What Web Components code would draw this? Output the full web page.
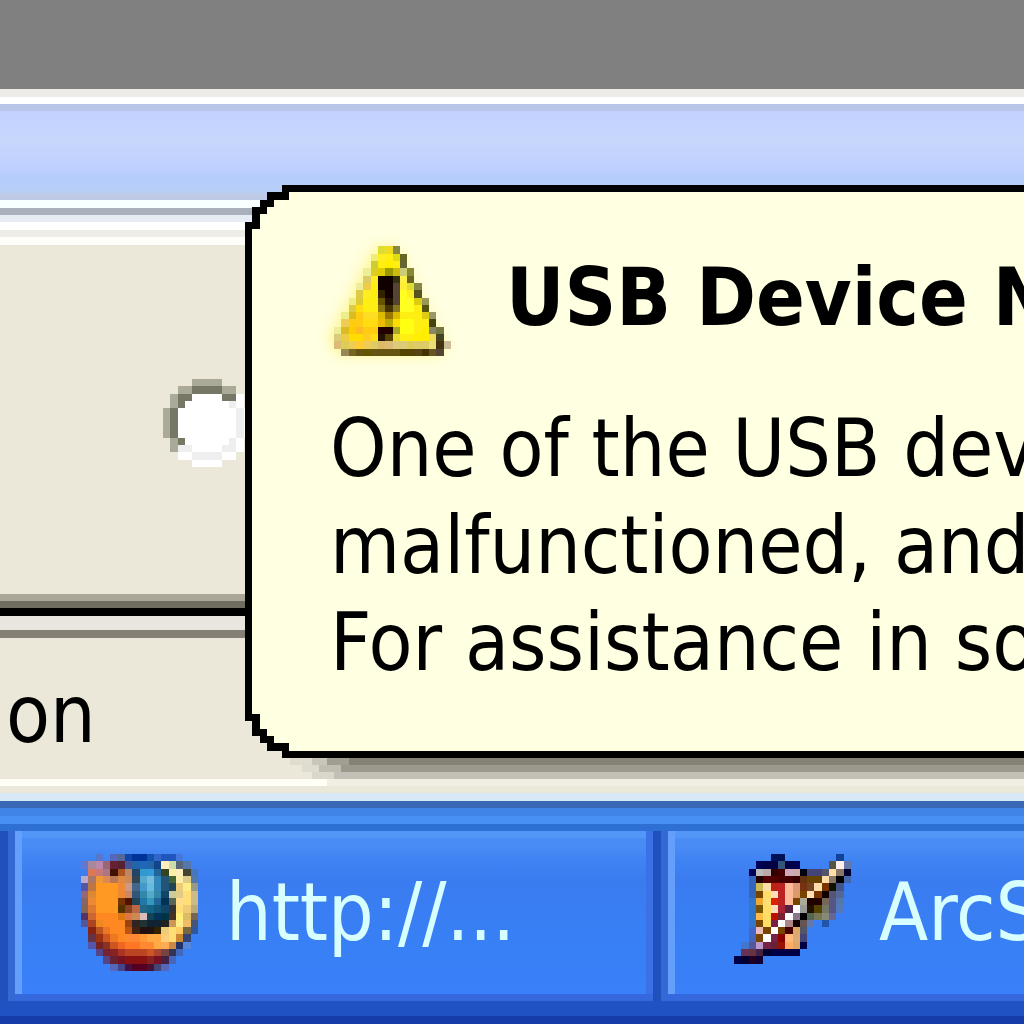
<!DOCTYPE html>
<html lang="en">
<head>
<meta charset="utf-8">
<title>Desktop</title>
<style>
    html, body { margin: 0; height: 100%; overflow: hidden; }
    body {
        font-family: "DejaVu Sans Condensed", "Noto Sans", sans-serif;
        font-size: 80px;
        line-height: 97px;
        color: #000;
    }
</style>
</head>
<body>
<xp-desktop>
    <xp-titlebar></xp-titlebar>
    <xp-panel><xp-radio label="Option"></xp-radio></xp-panel>
    <xp-statusbar>on</xp-statusbar>
    <xp-balloon slot="overlay">
        <pixel-icon slot="icon" name="warning"></pixel-icon>
        <span slot="title">USB Device N</span>
        <div>One of the USB dev</div>
        <div>malfunctioned, and</div>
        <div>For assistance in so</div>
    </xp-balloon>
    <xp-taskbar slot="taskbar">
        <xp-task icon="firefox">http://...</xp-task>
        <xp-task icon="arcsoft">ArcS</xp-task>
    </xp-taskbar>
</xp-desktop>

<script>
// One string per row: "." is an empty cell, "abc*4" repeats a colour
const ICONS = {
    warning: [
        '',
        '.*6 dd3 ed2 884',
        '.*5 ee7 fe2 fe1 dd1 662',
        '.*5 cc3 fe1 fe0 fe1 663',
        '.*4 ee9 dc2 dc0 990 cb1 cc7 883',
        '.*4 dc6 fe2 100*2 331 fe4 662',
        '.*3 ee9 ec4 fe1 100*2 543 fe3 dd3 884',
        '.*3 dc4 fe2 fe1 320 100 543 ff2 fe2 552',
        '.*2 ee8 dc3 fe1*2 650 210 543 ff2*2 dc1 995',
        '.*2 dc4 fd1 fe1*2 871 430 872 ff2*2 fe1 551',
        '. ee8 db2 fc1 fd2*2 db0 970 db0 fe1*3 dc1 996',
        '. ec5 fc1*2 fd1*2 eb0 ba0 fd0 ff1*2 fe1*2 441',
        'ee9 db2 fc0 fb2 fc1*2 200*2 aa2 ff1*2 fe1 fe0 886 774',
        'dc7 ec4 fd0*2 fc2 fd1 210 540 ed3 fe1*2 fe0*2 ed5 442',
        'db7 dc5 ec5 fc3 ec5 dc6 db6 db7 dc7*2 dc5 dc6*2 ed7 431 cb9',
        '. 985 762 651 650 651*4 540*2 541 430 652 543'
    ],
    firefox: [
        '.*2 57c . 56b 569 14a 039*2 15a 36c 25b*2 47d',
        '67c a89 b8a 967 623 523 459 26a 26b 26a 148 feb cda 567 57a',
        '. d75 c77 a78 410 a52 b86 246 39c 39d 269 342 fea feb 443 47b',
        'bac a76 e93 d85 b75 d84 c85 345 5ac 7bd 38b 257 463 fea dc8 57a',
        '55a b74 f92*3 e83 c98 468 49c 6bd 38b 257 245 ec7 fe8 998',
        '967 d83 f92*3 e83 c86 357 38a 5ac 38a 146 cc9 dc8 fd7 cb8',
        '866 e83 f92*3 730 510 245 27a 39b 269 035 565 fd8 fd7 cb8',
        '865 d73 f92*3 530 842 b64 268 168 157 146 333 fd7 ec7 ba7',
        '536 c63 f82*3 d71 d74 c85 dbb 145 035 034 432 fe7 db6 765',
        '559 a42 e82 f82*3 941 322 233 123*2 222 c95 fe8 eb6 457',
        '. 821 b52 e72 f82*2 b51 421 211*2 320 ec7 fd7 fc6 764 359',
        '. 634 931 c52 e72 f82 f83*2 f93 fa4*2 fc7 fd7 c83 347',
        '. 55a 722 832 c52 e62 f72*2 f83*2 fa4 fa5 c84 236 58d',
        '.*2 548 723 822 a32 b42*3 c52 a43 744 335 46b',
        '.*3 548 623 712 811*3 822 712 424 46b',
        '.*4 56b 448 414 502*2 413 447 56b'
    ],
    arcsoft: [
        '.*5 015*2 .*7 149',
        '.*3 005 004*2 357 004 005 .*4 554 fee 67a',
        '.*2 005 bbb baa 300 400 cab caa 001 447*2 556 fda 876 003',
        '.*2 36b 200 500*2 400*2 300 631 640*2 fda 876 000 46a',
        '.*2 36b cb5 fda b21 b22 fb9 d97 731 742 fda 730 110 458',
        '.*2 36b 740 fd6 fdb b22 fb9 d96 740 fdb 730 100 557 569',
        '.*2 37c ea3 fd7 d20 b22 fb9 740 aa9 200*2 765 558 57a',
        '.*2 37c 750 fd6 fdb a23 524 fff 999 210 540 776 558 57b',
        '.*2 37c fb4 fd6 b10 723 fff 878 000 565 775 887 669',
        '.*2 37c 740 fd6 724 fff a88 100 655 67a .  25a',
        '.*2 46c ebb 740 fff 740 400 da6 556',
        '.*2 46b 740 fff 724 800 fb7 da7 447',
        '. 47c 559 b9c 724 623 910 fa6 da6 004',
        '. 635 634 424 003 004*4',
        '004 003 202 103'
    ],
    radio: [
        '.*4 aa9*4',
        '.*2 aa9*2 776*4 aa9*2',
        '. aa9 776*2 fff*4 776*2 fff',
        '. aa9 776 fff*6 eee fff',
        'aa9 776 fff*8 eee fff',
        'aa9 776 fff*8 eee fff',
        'aa9 776 fff*8 eee fff',
        'aa9 776 fff*8 eee fff',
        '. aa9 776 fff*6 eee fff',
        '. aa9 eee*2 fff*4 eee*2 fff',
        '.*2 fff*2 eee*4 fff*2',
        '.*4 fff*4'
    ]
};

class PixelIcon extends HTMLElement {
    constructor() {
        super();
        this.attachShadow({ mode: 'open' });
    }

    connectedCallback() {
        const name = this.getAttribute('name');
        const size = name === 'radio' ? 12 : 16;
        const rects = ICONS[name].map((row, y) => {
            let x = 0;
            return row.split(/\s+/).filter(Boolean).map((run) => {
                const [color, count] = run.split('*');
                const width = Number(count || 1);
                const rect = color === '.' ? '' :
                    `<rect x="${x}" y="${y}" width="${width}" height="1" fill="#${color}"/>`;
                x += width;
                return rect;
            }).join('');
        }).join('');

        this.shadowRoot.innerHTML = `
            <style>
                :host { display: block; flex: none; width: 117px; height: 117px; }
                :host([name="radio"]) { width: 88px; height: 88px; }
                :host([name="warning"]) { filter: drop-shadow(-4px 0 6px #fff79a); }
                svg { display: block; width: 100%; height: 100%; }
            </style>
            <svg viewBox="0 0 ${size} ${size}" shape-rendering="crispEdges" aria-hidden="true">${rects}</svg>
        `;
    }
}

class XpDesktop extends HTMLElement {
    constructor() {
        super();
        this.attachShadow({ mode: 'open' }).innerHTML = `
            <style>
                :host {
                    display: flex;
                    flex-direction: column;
                    position: relative;
                    height: 100%;
                    overflow: hidden;
                    background: #808080;
                }
                main {
                    flex: 1;
                    min-height: 0;
                    display: flex;
                    flex-direction: column;
                    margin-top: 89px;
                }
            </style>
            <main><slot></slot></main>
            <slot name="taskbar"></slot>
            <slot name="overlay"></slot>
        `;
    }
}

class XpTitlebar extends HTMLElement {
    constructor() {
        super();
        this.attachShadow({ mode: 'open' }).innerHTML = `
            <style>
                :host { display: block; flex: none; }
                .frame {
                    height: 8px;
                    background: #ecebe7;
                    border-bottom: 7px solid #fff;
                }
                .caption {
                    height: 82px;
                    border-top: 7px solid #b8c5e6;
                    border-bottom: 7px solid #bfcae6;
                    background: linear-gradient(#c2d2ff, #c7d6fb 35%, #c0d1ff 68%, #b4cdfb 82%, #b8cff5);
                }
                .edge {
                    height: 45px;
                    background: linear-gradient(#f8ffff 8px, #a7b0bb 8px 15px, #e7ecf4 15px 22px,
                        #fff 22px 30px, #edece6 30px 37px, #fffffa 37px);
                }
            </style>
            <div class="frame"></div>
            <div class="caption"></div>
            <div class="edge"></div>
        `;
    }
}

class XpPanel extends HTMLElement {
    constructor() {
        super();
        this.attachShadow({ mode: 'open' }).innerHTML = `
            <style>
                :host {
                    display: flex;
                    flex-direction: column;
                    flex: 1;
                    min-height: 0;
                    background: #ebe8da;
                }
                .content {
                    flex: 1;
                    display: flex;
                    align-items: center;
                    padding: 6px 0 0 163px;
                }
                .rule {
                    height: 44px;
                    background: linear-gradient(#a9a698 7px, #6f6c60 7px 14px, #000 14px 22px,
                        #e9e6e0 22px 36px, #848074 36px);
                }
            </style>
            <div class="content"><slot></slot></div>
            <div class="rule"></div>
        `;
    }
}

class XpRadio extends HTMLElement {
    constructor() {
        super();
        this.attachShadow({ mode: 'open' });
    }

    connectedCallback() {
        this.shadowRoot.innerHTML = `
            <style>
                :host { display: block; }
                label { display: grid; }
                input, pixel-icon { grid-area: 1 / 1; }
                input { appearance: none; width: 88px; height: 88px; margin: 0; }
            </style>
            <label>
                <pixel-icon name="radio"></pixel-icon>
                <input type="radio" aria-label="${this.getAttribute('label')}">
            </label>
        `;
    }
}

class XpStatusbar extends HTMLElement {
    constructor() {
        super();
        this.attachShadow({ mode: 'open' }).innerHTML = `
            <style>
                :host {
                    display: block;
                    flex: none;
                    background: #ebe8da;
                }
                .text { padding: 28px 6px 16px; }
                .edge {
                    height: 22px;
                    background: linear-gradient(#fffff5 7px, #ebe8da 7px 14px, #d9e8f6 14px);
                }
            </style>
            <div class="text"><slot></slot></div>
            <div class="edge"></div>
        `;
    }
}

class XpBalloon extends HTMLElement {
    constructor() {
        super();
        this.attachShadow({ mode: 'open' }).innerHTML = `
            <style>
                :host {
                    position: absolute;
                    top: 185px;
                    left: 245px;
                    right: 0;
                    white-space: nowrap;
                }
                /* the stepped corners: black outline, then the fill inside it */
                .outline {
                    background: #000;
                    padding: 7px 0 7px 0;
                    clip-path: polygon(
                        100% 0, 37px 0, 37px 7px, 22px 7px, 22px 15px, 15px 15px, 15px 22px,
                        7px 22px, 7px 37px, 0 37px,
                        0 calc(100% - 37px), 7px calc(100% - 37px), 7px calc(100% - 22px),
                        15px calc(100% - 22px), 15px calc(100% - 15px), 22px calc(100% - 15px),
                        22px calc(100% - 7px), 37px calc(100% - 7px), 37px 100%, 100% 100%);
                }
                .fill {
                    background: #ffffe1;
                    padding: 47px 0 60px 85px;
                    overflow: hidden;
                    clip-path: polygon(
                        100% 0, 44px 0, 44px 8px, 29px 8px, 29px 15px, 22px 15px, 22px 22px,
                        15px 22px, 15px 37px, 7px 37px,
                        7px calc(100% - 37px), 15px calc(100% - 37px), 15px calc(100% - 22px),
                        22px calc(100% - 22px), 22px calc(100% - 15px), 29px calc(100% - 15px),
                        29px calc(100% - 8px), 44px calc(100% - 8px), 44px 100%, 100% 100%);
                }
                header {
                    display: flex;
                    align-items: center;
                    gap: 55px;
                    margin: 0 0 44px 4px;
                }
                h1 { margin: 0; font: inherit; font-weight: bold; }
                .shadow div { height: 7px; }
                .s1 { background: linear-gradient(90deg, transparent 45px, #e0ddd0 45px 67px, #c8c6ba 67px 82px, #a09d91 82px 104px, #858174 104px); }
                .s2 { background: linear-gradient(90deg, transparent 57px, #dfdccf 57px 74px, #c0beb1 74px 96px, #9b988d 96px); }
                .s3 { background: linear-gradient(90deg, transparent 67px, #d9d7ca 67px 89px, #c2c0b6 89px); }
                .s4 { background: linear-gradient(90deg, transparent 82px, #f1eee4 82px); }
            </style>
            <div class="outline">
                <div class="fill">
                    <header>
                        <slot name="icon"></slot>
                        <h1><slot name="title"></slot></h1>
                    </header>
                    <slot></slot>
                </div>
            </div>
            <div class="shadow">
                <div class="s1"></div>
                <div class="s2"></div>
                <div class="s3"></div>
                <div class="s4"></div>
            </div>
        `;
    }
}

class XpTaskbar extends HTMLElement {
    constructor() {
        super();
        this.attachShadow({ mode: 'open' }).innerHTML = `
            <style>
                :host { display: block; flex: none; overflow: hidden; }
                .top {
                    height: 30px;
                    background: linear-gradient(#3b68b4 7px, #4084e8 7px 15px, #4990f5 15px 23px, #2d6fd2 23px);
                }
                nav {
                    display: flex;
                    gap: 15px;
                    padding-left: 15px;
                    background: #2c5fce;
                }
                .bottom {
                    height: 23px;
                    background: linear-gradient(#2052c4 15px, #153ca8 15px);
                }
            </style>
            <div class="top"></div>
            <nav><slot></slot></nav>
            <div class="bottom"></div>
        `;
    }
}

class XpTask extends HTMLElement {
    constructor() {
        super();
        this.attachShadow({ mode: 'open' });
    }

    connectedCallback() {
        this.shadowRoot.innerHTML = `
            <style>
                :host {
                    display: block;
                    flex: none;
                    width: 638px;
                    box-shadow: -7px 0 #3468d2, -15px 0 #1f50bb;
                }
                button {
                    display: flex;
                    align-items: center;
                    gap: 28px;
                    width: 100%;
                    height: 170px;
                    padding: 0 0 8px 66px;
                    border: 0;
                    background: linear-gradient(#5296f8 7px, #498cf6 7px 15px, #4083f3 28px, #3a7cf0 50px, #3880f6 120px, #3a80fa);
                    box-shadow: inset 0 -7px #3468dc, inset 7px 0 #639ffb, inset -7px 0 #3b70e6;
                    font: inherit;
                    line-height: 97px;
                    color: #d8ffff;
                    white-space: nowrap;
                }
            </style>
            <button type="button">
                <pixel-icon name="${this.getAttribute('icon')}"></pixel-icon>
                <span><slot></slot></span>
            </button>
        `;
    }
}

customElements.define('pixel-icon', PixelIcon);
customElements.define('xp-desktop', XpDesktop);
customElements.define('xp-titlebar', XpTitlebar);
customElements.define('xp-panel', XpPanel);
customElements.define('xp-radio', XpRadio);
customElements.define('xp-statusbar', XpStatusbar);
customElements.define('xp-balloon', XpBalloon);
customElements.define('xp-taskbar', XpTaskbar);
customElements.define('xp-task', XpTask);
</script>
</body>
</html>
